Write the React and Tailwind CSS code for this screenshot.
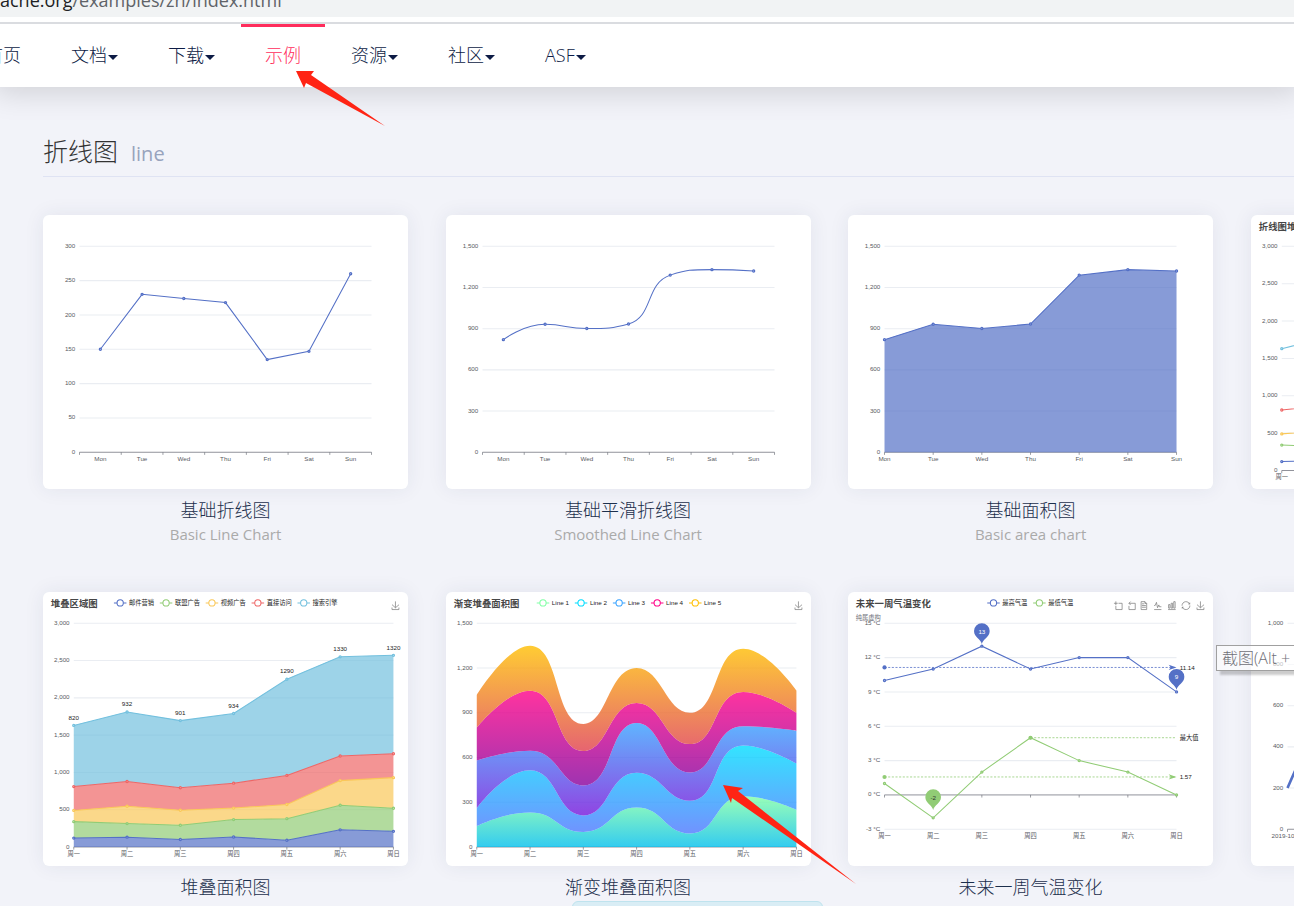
const COLORS = ["#5470c6", "#91cc75", "#fac858", "#ee6666", "#73c0de"];
const WEEK_EN = ["Mon", "Tue", "Wed", "Thu", "Fri", "Sat", "Sun"];
const WEEK_ZH = ["周一", "周二", "周三", "周四", "周五", "周六", "周日"];
const BASIC = [820, 932, 901, 934, 1290, 1330, 1320];

const SOURCES = [
  { name: "邮件营销", data: [120, 132, 101, 134, 90, 230, 210] },
  { name: "联盟广告", data: [220, 182, 191, 234, 290, 330, 310] },
  { name: "视频广告", data: [150, 232, 201, 154, 190, 330, 410] },
  { name: "直接访问", data: [320, 332, 301, 334, 390, 330, 320] },
  { name: "搜索引擎", data: [820, 932, 901, 934, 1290, 1330, 1320] },
];

const GRADIENTS = [
  { name: "Line 1", data: [140, 232, 101, 264, 90, 340, 250], from: "#80ffa5", to: "#01bfec" },
  { name: "Line 2", data: [120, 282, 111, 234, 220, 340, 310], from: "#00ddff", to: "#4d77ff" },
  { name: "Line 3", data: [320, 132, 201, 334, 190, 130, 220], from: "#37a2ff", to: "#7415db" },
  { name: "Line 4", data: [220, 402, 231, 134, 190, 230, 120], from: "#ff0087", to: "#87009d" },
  { name: "Line 5", data: [220, 302, 181, 234, 210, 290, 150], from: "#ffbf00", to: "#e03e4c" },
];

const WIDE = { left: 70, right: 630, top: 60, bottom: 455 };
const TALL = { left: 59, right: 672, top: 60, bottom: 489 };

const clamp = (v, a, b) => Math.max(Math.min(a, b), Math.min(Math.max(a, b), v));

// bezier segments [p0, c1, c2, p1] through the points
function segments(points, smooth) {
  const n = points.length;
  const segs = [];
  let out = points[0];
  for (let i = 1; i < n; i++) {
    const prev = points[i - 1];
    const p = points[i];
    let cIn = p;
    let cOut = p;
    if (i < n - 1 && smooth) {
      const next = points[i + 1];
      const lenPrev = Math.hypot(p[0] - prev[0], p[1] - prev[1]);
      const lenNext = Math.hypot(next[0] - p[0], next[1] - p[1]);
      const ratio = lenNext / (lenNext + lenPrev);
      cOut = [0, 1].map((k) =>
        clamp(p[k] + (next[k] - prev[k]) * smooth * ratio, p[k], next[k])
      );
      cIn = [0, 1].map((k) =>
        clamp(p[k] - ((cOut[k] - p[k]) * lenPrev) / lenNext, prev[k], p[k])
      );
      cOut = [0, 1].map((k) => p[k] + ((p[k] - cIn[k]) * lenNext) / lenPrev);
    }
    segs.push([prev, out, cIn, p]);
    out = cOut;
  }
  return segs;
}

const curve = (segs) => segs.map(([, a, b, c]) => `C${a} ${b} ${c}`).join("");

const linePath = (points, smooth = 0) =>
  `M${points[0]}${curve(segments(points, smooth))}`;

function areaPath(top, base, smooth = 0) {
  const back = segments(base, smooth)
    .map(([a, b, c, d]) => [d, c, b, a])
    .reverse();
  return `${linePath(top, smooth)}L${base[base.length - 1]}${curve(back)}Z`;
}

function toPoints(data, grid, min, max, gap = false) {
  const step = (grid.right - grid.left) / (gap ? data.length : data.length - 1);
  return data.map((v, i) => [
    grid.left + step * (gap ? i + 0.5 : i),
    grid.bottom - ((v - min) / (max - min)) * (grid.bottom - grid.top),
  ]);
}

function stack(series) {
  const total = series[0].data.map(() => 0);
  return series.map((s) => {
    s.data.forEach((v, i) => (total[i] += v));
    return [...total];
  });
}

function Chart({ label, children }) {
  return (
    <svg
      viewBox="0 0 700 525"
      role="img"
      aria-label={label}
      className="block w-full h-auto"
      fontFamily='"Liberation Sans", "Noto Sans CJK SC", sans-serif'
      fontSize="12"
    >
      {children}
    </svg>
  );
}

function Axes({ grid, min = 0, max, step, labels, gap = false, unit = "" }) {
  const ticks = [];
  for (let v = min; v <= max; v += step) ticks.push(v);
  const y = (v) => grid.bottom - ((v - min) / (max - min)) * (grid.bottom - grid.top);
  const n = gap ? labels.length : labels.length - 1;
  const dx = (grid.right - grid.left) / n;

  return (
    <g fill="#585a62">
      {ticks.map((v) => (
        <g key={v}>
          {v !== 0 && (
            <line x1={grid.left} x2={grid.right} y1={y(v)} y2={y(v)} stroke="#eaedf2" strokeWidth="2" />
          )}
          <text x={grid.left - 8} y={y(v) + 3} textAnchor="end">
            {v.toLocaleString("en-US") + unit}
          </text>
        </g>
      ))}
      <line x1={grid.left} x2={grid.right} y1={y(0)} y2={y(0)} stroke="#8a8c94" strokeWidth="1.8" />
      {Array.from({ length: n + 1 }, (_, i) => (
        <line
          key={i}
          x1={grid.left + dx * i}
          x2={grid.left + dx * i}
          y1={y(0)}
          y2={y(0) + 5}
          stroke="#6e7079"
          strokeWidth="1.3"
        />
      ))}
      {labels.map((t, i) => (
        <text key={t} x={grid.left + dx * (gap ? i + 0.5 : i)} y={grid.bottom + 17} textAnchor="middle">
          {t}
        </text>
      ))}
    </g>
  );
}

function Dots({ points, color, r = 2 }) {
  return points.map(([x, y], i) => (
    <circle key={i} cx={x} cy={y} r={r} fill="#fff" fillOpacity="0.6" stroke={color} strokeWidth="2.4" />
  ));
}

function Title({ children }) {
  return (
    <text x="15" y="29" fontSize="18" fontWeight="bold" fill="#464646">
      {children}
    </text>
  );
}

function Legend({ items, x, pitch }) {
  return items.map(({ name, color }, i) => (
    <g key={name} transform={`translate(${x + i * pitch} 21)`}>
      <line x1="-12" x2="12" y1="0" y2="0" stroke={color} strokeWidth="2" />
      <circle r="6" fill="#fff" stroke={color} strokeWidth="2" />
      <text x="17" y="4" fill="#222">
        {name}
      </text>
    </g>
  ));
}

const TOOLS = {
  zoom: "M0,13.5h26.9M13.5,26.9V0M32.1,13.5H58V58H13.5V32.1",
  back: "M22,1.4L9.9,13.5l12.3,12.3M10.3,13.5H54.9v44.6H10.3v-26",
  data: "M17.5,17.3H33M45.4,29.5h-28M11.5,2v56H51V14.8L38.4,2H11.5zM38.4,2.2v12.7H51M45.4,41.7h-28",
  line: "M4.1,28.9h7.1l9.3-22l7.4,38l9.7-19.7l3,12.8h14.9M4.1,58h51.4",
  bar: "M6.7,22.9h10V48h-10V22.9zM24.9,13h10v35h-10V13zM43.2,2h10v46h-10V2zM3.1,58h53.7",
  restore:
    "M47,18.9h9.8V8.7M56.3,20.1C52.1,9,40.5,0.6,26.8,2.1C12.6,3.7,1.6,16.2,2.1,30.6M13,41.1H3.1v10.2M3.7,39.9c4.2,11.1,15.8,19.5,29.5,18c14.2-1.6,25.2-14.1,24.7-28.5",
  save: "M4.7,22.9L29.3,45.5L54.7,23.4M4.6,43.6L4.6,58L53.8,58L53.8,43.6M29.2,45.1L29.2,0",
};

function Tool({ name, x }) {
  return (
    <path
      d={TOOLS[name]}
      transform={`translate(${x - 8} 18) scale(0.27)`}
      fill="none"
      stroke="#777"
      strokeWidth="5"
    />
  );
}

function BasicLine() {
  const points = toPoints([150, 230, 224, 218, 135, 147, 260], WIDE, 0, 300, true);
  return (
    <Chart label="基础折线图">
      <Axes grid={WIDE} max={300} step={50} labels={WEEK_EN} gap />
      <path d={linePath(points)} fill="none" stroke={COLORS[0]} strokeWidth="2" />
      <Dots points={points} color={COLORS[0]} />
    </Chart>
  );
}

function SmoothLine() {
  const points = toPoints(BASIC, WIDE, 0, 1500, true);
  return (
    <Chart label="基础平滑折线图">
      <Axes grid={WIDE} max={1500} step={300} labels={WEEK_EN} gap />
      <path d={linePath(points, 0.5)} fill="none" stroke={COLORS[0]} strokeWidth="2" />
      <Dots points={points} color={COLORS[0]} />
    </Chart>
  );
}

function BasicArea() {
  const points = toPoints(BASIC, WIDE, 0, 1500);
  const base = toPoints(BASIC.map(() => 0), WIDE, 0, 1500);
  return (
    <Chart label="基础面积图">
      <Axes grid={WIDE} max={1500} step={300} labels={WEEK_EN} />
      <path d={areaPath(points, base)} fill={COLORS[0]} opacity="0.7" />
      <path d={linePath(points)} fill="none" stroke={COLORS[0]} strokeWidth="2" />
      <Dots points={points} color={COLORS[0]} />
    </Chart>
  );
}

function StackedLine() {
  const grid = { ...TALL, bottom: 490 };
  const rows = stack(SOURCES).map((row) => toPoints(row, grid, 0, 3000));
  return (
    <Chart label="折线图堆叠">
      <Title>折线图堆叠</Title>
      <Legend items={SOURCES.map((s, i) => ({ name: s.name, color: COLORS[i] }))} x={148} pitch={88} />
      <Axes grid={grid} max={3000} step={500} labels={WEEK_ZH} />
      {rows.map((points, i) => (
        <g key={i}>
          <path d={linePath(points)} fill="none" stroke={COLORS[i]} strokeWidth="2" />
          <Dots points={points} color={COLORS[i]} />
        </g>
      ))}
    </Chart>
  );
}

function StackedArea() {
  const rows = stack(SOURCES).map((row) => toPoints(row, TALL, 0, 3000));
  const base = toPoints(WEEK_ZH.map(() => 0), TALL, 0, 3000);
  return (
    <Chart label="堆叠区域图">
      <Title>堆叠区域图</Title>
      <Legend items={SOURCES.map((s, i) => ({ name: s.name, color: COLORS[i] }))} x={148} pitch={88} />
      <Tool name="save" x={676} />
      <Axes grid={TALL} max={3000} step={500} labels={WEEK_ZH} />
      {rows.map((points, i) => (
        <path key={i} d={areaPath(points, rows[i - 1] || base)} fill={COLORS[i]} opacity="0.7" />
      ))}
      {rows.map((points, i) => (
        <g key={i}>
          <path d={linePath(points)} fill="none" stroke={COLORS[i]} strokeWidth="2" />
          <Dots points={points} color={COLORS[i]} />
        </g>
      ))}
      {rows[4].map(([x, y], i) => (
        <text key={i} x={x} y={y - 11} textAnchor="middle" fill="#222">
          {BASIC[i]}
        </text>
      ))}
    </Chart>
  );
}

function GradientArea() {
  const rows = stack(GRADIENTS).map((row) => toPoints(row, TALL, 0, 1500));
  const base = toPoints(WEEK_ZH.map(() => 0), TALL, 0, 1500);
  return (
    <Chart label="渐变堆叠面积图">
      <defs>
        {GRADIENTS.map((g, i) => (
          <linearGradient key={g.name} id={`area-${i}`} x1="0" y1="0" x2="0" y2="1">
            <stop offset="0" stopColor={g.from} />
            <stop offset="1" stopColor={g.to} />
          </linearGradient>
        ))}
      </defs>
      <Title>渐变堆叠面积图</Title>
      <Legend items={GRADIENTS.map((g) => ({ name: g.name, color: g.from }))} x={186} pitch={73} />
      <Tool name="save" x={676} />
      <Axes grid={TALL} max={1500} step={300} labels={WEEK_ZH} />
      {rows.map((points, i) => (
        <path
          key={i}
          d={areaPath(points, rows[i - 1] || base, 0.5)}
          fill={`url(#area-${i})`}
          opacity="0.8"
        />
      ))}
    </Chart>
  );
}

function Pin({ x, y, color, textColor = "#fff", children }) {
  return (
    <g transform={`translate(${x} ${y})`}>
      <path d="M0 -4C-2 -14 -15 -17 -15 -29A15 15 0 0 1 15 -29C15 -17 2 -14 0 -4Z" fill={color} />
      <text y="-24" textAnchor="middle" fill={textColor}>
        {children}
      </text>
    </g>
  );
}

function MarkLine({ x = WIDE.left, y, color, arrow = true, children }) {
  return (
    <g>
      <line x1={x} x2={WIDE.right} y1={y} y2={y} stroke={color} strokeWidth="1.5" strokeDasharray="4 3" />
      <circle cx={x} cy={y} r="4" fill={color} />
      {arrow && <path d={`M${WIDE.right} ${y}l-15 -5l4 5l-4 5z`} fill={color} />}
      <text x={WIDE.right + 6} y={y + 4} fill="#222">
        {children}
      </text>
    </g>
  );
}

function Temperature() {
  const high = toPoints([10, 11, 13, 11, 12, 12, 9], WIDE, -3, 15);
  const low = toPoints([1, -2, 2, 5, 3, 2, 0], WIDE, -3, 15);
  const [[, avgHigh], [, avgLow], [, pinLow]] = toPoints([11.14, 1.57, -1.5], WIDE, -3, 15);
  return (
    <Chart label="未来一周气温变化">
      <Title>未来一周气温变化</Title>
      <text x="15" y="53" fill="#6e7079">
        纯属虚构
      </text>
      <Legend
        items={[
          { name: "最高气温", color: COLORS[0] },
          { name: "最低气温", color: COLORS[1] },
        ]}
        x={279}
        pitch={88}
      />
      <Tool name="zoom" x={518} />
      <Tool name="back" x={544} />
      <Tool name="data" x={567} />
      <Tool name="line" x={594} />
      <Tool name="bar" x={621} />
      <Tool name="restore" x={648} />
      <Tool name="save" x={676} />
      <Axes grid={WIDE} min={-3} max={15} step={3} labels={WEEK_ZH} unit=" °C" />
      <path d={linePath(high)} fill="none" stroke={COLORS[0]} strokeWidth="2" />
      <Dots points={high} color={COLORS[0]} />
      <path d={linePath(low)} fill="none" stroke={COLORS[1]} strokeWidth="2" />
      <Dots points={low} color={COLORS[1]} />
      <MarkLine y={avgHigh} color={COLORS[0]}>11.14</MarkLine>
      <MarkLine y={avgLow} color={COLORS[1]}>1.57</MarkLine>
      <MarkLine x={low[3][0]} y={low[3][1]} color={COLORS[1]} arrow={false}>最大值</MarkLine>
      <Pin x={high[2][0]} y={high[2][1]} color={COLORS[0]}>13</Pin>
      <Pin x={high[6][0]} y={high[6][1]} color={COLORS[0]}>9</Pin>
      <Pin x={low[1][0]} y={pinLow} color={COLORS[1]} textColor="#333">-2</Pin>
    </Chart>
  );
}

function AreaPieces() {
  const points = toPoints([200, 560, 750, 580, 250, 300, 450, 300, 100], WIDE, 0, 1000);
  const labels = ["2019-10-10", "2019-10-12", "2019-10-14", "2019-10-16", "2019-10-18"];
  return (
    <Chart label="折线图区域高亮">
      <Axes grid={WIDE} max={1000} step={200} labels={labels} />
      <path d={linePath(points, 0.3)} fill="none" stroke={COLORS[0]} strokeWidth="5" />
    </Chart>
  );
}

const EXAMPLES = [
  { title: "基础折线图", subtitle: "Basic Line Chart", View: BasicLine },
  { title: "基础平滑折线图", subtitle: "Smoothed Line Chart", View: SmoothLine },
  { title: "基础面积图", subtitle: "Basic area chart", View: BasicArea },
  { title: "折线图堆叠", subtitle: "Stacked Line Chart", View: StackedLine },
  { title: "堆叠面积图", subtitle: "Stacked area chart", View: StackedArea },
  { title: "渐变堆叠面积图", subtitle: "Gradient Stacked area chart", View: GradientArea },
  { title: "未来一周气温变化", subtitle: "Temperature Change in the coming week", View: Temperature },
  { title: "折线图区域高亮", subtitle: "Area Pieces", View: AreaPieces },
];

const NAV = [
  { label: "首页" },
  { label: "文档", menu: true },
  { label: "下载", menu: true },
  { label: "示例", active: true },
  { label: "资源", menu: true },
  { label: "社区", menu: true },
  { label: "ASF", menu: true },
];

function NavItem({ label, menu, active }) {
  return (
    <a
      href="#"
      className={
        active
          ? "flex items-center h-full px-6 border-t-3 border-[#ff2d5c] pb-[3px] text-[#ff2d5c]"
          : "flex items-center h-full px-6 text-[#0d1b45]"
      }
    >
      <span>{label}</span>
      {menu && (
        <span className="ml-px mt-1 border-x-5 border-t-5 border-x-transparent border-t-[#0d1b45]" />
      )}
    </a>
  );
}

function ExampleCard({ title, subtitle, View }) {
  return (
    <a href="#" className="block">
      <div className="rounded-md overflow-hidden bg-white shadow-[0_0_20px_rgba(40,50,90,0.08)]">
        <View />
      </div>
      <div className="pt-[7px] pb-12 text-center">
        <h4 className="text-[18px] leading-7 font-light text-[#1c2f4c] whitespace-nowrap">
          {title}
        </h4>
        <p className="text-[15px] leading-5 text-[#aaaaaa] whitespace-nowrap">
          {subtitle}
        </p>
      </div>
    </a>
  );
}

export default function App() {
  return (
    <div className="relative h-screen overflow-hidden bg-[#f2f3f9] font-['Open_Sans','Noto_Sans_CJK_SC',sans-serif]">
      <div className="relative z-10 h-[17px] bg-[#f1f3f4] overflow-hidden">
        <div className="-mt-3 text-[18px] leading-6 whitespace-nowrap text-[#5f6368]">
          <span className="text-[#202124]">ache.org</span>/examples/zh/index.html
        </div>
      </div>
      <header className="relative border-t-5 border-white bg-white shadow-[0_0_30px_6px_rgba(0,0,0,0.14)]">
        <nav className="flex items-center gap-0.5 h-[65px] -ml-[39px] border-t-2 border-[#dadce0] text-[18px] font-light whitespace-nowrap">
          {NAV.map((item) => (
            <NavItem key={item.label} {...item} />
          ))}
        </nav>
      </header>

      <main className="pl-[43px] pt-[46px]">
        <h2 className="flex items-baseline gap-[13px] h-11 border-b border-[#dfe3f3] text-[25px] leading-9 font-light text-[#333]">
          折线图
          <span className="text-[20px] font-normal text-[#98a3bd]">line</span>
        </h2>

        <div className="mt-[38px] grid grid-cols-[repeat(4,29.18%)] gap-x-[3%]">
          {EXAMPLES.map((item) => (
            <ExampleCard key={item.title} {...item} />
          ))}
        </div>
      </main>

      <div className="absolute left-[572px] top-[901px] w-[251px] h-10 rounded-md border border-[#bfe3ee] bg-[#d9edf5]" />

      <div className="absolute left-[1216px] top-[645px] px-[5px] border border-[#a0a0a0] bg-white/60 shadow-[4px_4px_2px_rgba(0,0,0,0.2)] text-[16px] leading-6 font-light text-[#707078] whitespace-nowrap">
        截图(Alt + A)
      </div>

      <svg className="absolute left-[296px] top-[71px]" width="90" height="56" fill="#ff2414" aria-hidden="true">
        <path d="M0 0L18 0L15 4L89 55L10 12L8 17Z" />
      </svg>
      <svg className="absolute left-[723px] top-[785px]" width="134" height="100" fill="#ff2414" aria-hidden="true">
        <path d="M0 0L20 3L15 6L133 99L9 13L8 18Z" />
      </svg>
    </div>
  );
}
